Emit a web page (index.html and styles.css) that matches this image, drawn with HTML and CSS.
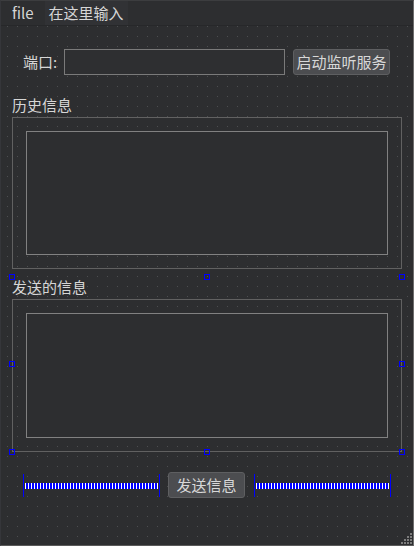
FILE: index.html
```html
<!DOCTYPE html>
<html lang="zh">
<head>
<meta charset="utf-8">
<title>Form</title>
<link rel="stylesheet" href="styles.css">
</head>
<body>
<div class="window">
  <div class="menubar">
    <span class="menu-item">file</span>
    <span class="menu-item menu-input">在这里输入</span>
  </div>
  <div class="form">
    <div class="port-row">
      <span class="label">端口:</span>
      <div class="line-edit"></div>
      <button class="btn btn-start">启动监听服务</button>
    </div>
    <div class="group group-history">
      <div class="group-title">历史信息</div>
      <div class="group-frame"><div class="text-edit"></div></div>
    </div>
    <div class="group group-send">
      <div class="group-title">发送的信息</div>
      <div class="group-frame"><div class="text-edit"></div></div>
    </div>
    <div class="send-row">
      <div class="spacer"><div class="spring"></div></div>
      <button class="btn btn-send">发送信息</button>
      <div class="spacer"><div class="spring"></div></div>
    </div>
  </div>
  <span class="handle h-tl"></span>
  <span class="handle h-tc"></span>
  <span class="handle h-tr"></span>
  <span class="handle h-ml"></span>
  <span class="handle h-mr"></span>
  <span class="handle h-bl"></span>
  <span class="handle h-bc"></span>
  <span class="handle h-br"></span>
  <svg class="grip" width="12" height="12" viewBox="0 0 12 12">
    <g fill="#7c7c7c">
      <rect x="9" y="0" width="2" height="2"/>
      <rect x="6" y="3" width="2" height="2"/><rect x="9" y="3" width="2" height="2"/>
      <rect x="3" y="6" width="2" height="2"/><rect x="6" y="6" width="2" height="2"/><rect x="9" y="6" width="2" height="2"/>
      <rect x="0" y="9" width="2" height="2"/><rect x="3" y="9" width="2" height="2"/><rect x="6" y="9" width="2" height="2"/><rect x="9" y="9" width="2" height="2"/>
    </g>
  </svg>
</div>
</body>
</html>
```
FILE: styles.css
```css
html, body {
  margin: 0;
  padding: 0;
  background: #2d2e30;
}

.window {
  position: relative;
  width: 414px;
  height: 546px;
  box-sizing: border-box;
  border-top: 1px solid #3c3d3f;
  border-left: 1px solid #35363a;
  border-right: 1px solid #6e6e6e;
  border-bottom: 1px solid #5a5a5a;
  background: #2d2e30;
  color: #d6d6d6;
  font-family: "Noto Sans CJK SC", "Noto Sans", sans-serif;
  font-size: 15px;
  overflow: hidden;
  display: flex;
  flex-direction: column;
}

.menubar {
  height: 24px;
  border-bottom: 1px solid #27282a;
  display: flex;
  align-items: center;
  padding-left: 11px;
  flex: none;
}

.menu-item {
  line-height: 24px;
}

.menu-input {
  margin-left: 11px;
  padding: 0 4px;
  background: #313235;
}

.form {
  flex: 1;
  display: flex;
  flex-direction: column;
  background-color: #2d2e30;
  background-image: radial-gradient(circle at 0.5px 0.5px, #4d4e50 0.7px, transparent 0.9px);
  background-size: 10px 10px;
  background-position: 6px 0;
}

.port-row {
  display: flex;
  align-items: center;
  height: 26px;
  margin-top: 23px;
  padding-left: 22px;
}

.label {
  width: 35px;
  line-height: 20px;
}

.line-edit {
  width: 221px;
  height: 26px;
  box-sizing: border-box;
  margin-left: 6px;
  border: 1px solid #7a7a7a;
  background: #2e2f31;
}

.btn {
  height: 26px;
  box-sizing: border-box;
  padding: 0;
  border: 1px solid #5e5f61;
  border-radius: 3px;
  background: #4c4d50;
  color: #d8d8d8;
  font-family: "Noto Sans CJK SC", "Noto Sans", sans-serif;
  font-size: 15px;
  line-height: 22px;
}

.btn-start {
  width: 97px;
  margin-left: 8px;
}

.group {
  margin-left: 11px;
  width: 390px;
}

.group-history {
  margin-top: 20px;
}

.group-send {
  margin-top: 8px;
}

.group-title {
  height: 20px;
  line-height: 20px;
  margin-bottom: 2px;
}

.group-frame {
  border: 1px solid #616161;
  padding: 13px;
}

.text-edit {
  height: 125px;
  box-sizing: border-box;
  border: 1px solid #818181;
  background: #2d2e30;
}

.group-history .text-edit {
  height: 124px;
}

.send-row {
  display: flex;
  align-items: center;
  height: 26px;
  margin-top: 20px;
  padding-left: 22px;
}

.spacer {
  width: 137px;
  height: 23px;
  box-sizing: border-box;
  border-left: 1px solid #0000ff;
  border-right: 1px solid #0000ff;
  display: flex;
  align-items: center;
  padding: 0 1px;
  margin-top: 1px;
}

.spring {
  flex: 1;
  height: 6px;
  background: repeating-linear-gradient(to right, #ffffff 0 1px, #0000ff 1px 3px);
}

.btn-send {
  width: 77px;
  margin-left: 8px;
  margin-right: 9px;
}

.handle {
  position: absolute;
  width: 6px;
  height: 6px;
  box-sizing: border-box;
  border: 1px solid #0000ff;
}

.h-tl { left: 8px; top: 273px; }
.h-tc { left: 203px; top: 273px; }
.h-tr { left: 398px; top: 273px; }
.h-ml { left: 8px; top: 360px; }
.h-mr { left: 398px; top: 360px; }
.h-bl { left: 8px; top: 448px; }
.h-bc { left: 203px; top: 448px; }
.h-br { left: 398px; top: 448px; }

.grip {
  position: absolute;
  right: 0;
  bottom: 0;
}
```
